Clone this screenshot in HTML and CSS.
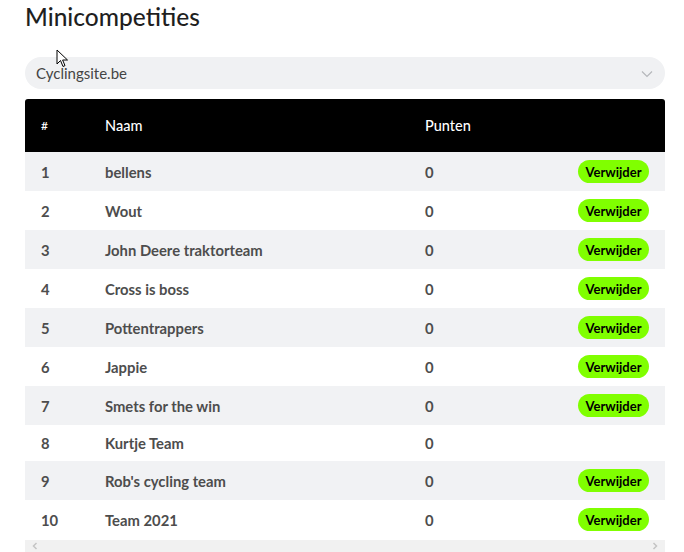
FILE: index.html
```html
<!DOCTYPE html>
<html lang="nl">
<head>
<meta charset="utf-8">
<title>Minicompetities</title>
<link rel="stylesheet" href="styles.css">
</head>
<body>
<div class="page">
  <h1 class="title">Minicompetities</h1>
  <div class="select">
    <span class="select-text">Cyclingsite.be</span>
    <svg class="chev" width="12" height="8" viewBox="0 0 12 8"><path d="M1 1.5 L6 6.5 L11 1.5" fill="none" stroke="#b5b7bb" stroke-width="1.2"/></svg>
  </div>
  <div class="table-wrap">
    <table class="ranking">
      <thead>
        <tr><th class="c-rank">#</th><th class="c-name">Naam</th><th class="c-pts">Punten</th><th class="c-act"></th></tr>
      </thead>
      <tbody>
        <tr><td class="c-rank">1</td><td class="c-name">bellens</td><td class="c-pts">0</td><td class="c-act"><button class="btn">Verwijder</button></td></tr>
        <tr><td class="c-rank">2</td><td class="c-name">Wout</td><td class="c-pts">0</td><td class="c-act"><button class="btn">Verwijder</button></td></tr>
        <tr><td class="c-rank">3</td><td class="c-name">John Deere traktorteam</td><td class="c-pts">0</td><td class="c-act"><button class="btn">Verwijder</button></td></tr>
        <tr><td class="c-rank">4</td><td class="c-name">Cross is boss</td><td class="c-pts">0</td><td class="c-act"><button class="btn">Verwijder</button></td></tr>
        <tr><td class="c-rank">5</td><td class="c-name">Pottentrappers</td><td class="c-pts">0</td><td class="c-act"><button class="btn">Verwijder</button></td></tr>
        <tr><td class="c-rank">6</td><td class="c-name">Jappie</td><td class="c-pts">0</td><td class="c-act"><button class="btn">Verwijder</button></td></tr>
        <tr><td class="c-rank">7</td><td class="c-name">Smets for the win</td><td class="c-pts">0</td><td class="c-act"><button class="btn">Verwijder</button></td></tr>
        <tr class="short"><td class="c-rank">8</td><td class="c-name">Kurtje Team</td><td class="c-pts">0</td><td class="c-act"></td></tr>
        <tr><td class="c-rank">9</td><td class="c-name">Rob's cycling team</td><td class="c-pts">0</td><td class="c-act"><button class="btn">Verwijder</button></td></tr>
        <tr><td class="c-rank">10</td><td class="c-name">Team 2021</td><td class="c-pts">0</td><td class="c-act"><button class="btn">Verwijder</button></td></tr>
      </tbody>
    </table>
    <div class="hscroll">
      <svg width="8" height="8" viewBox="0 0 8 8"><path d="M5.5 1 L2.5 4 L5.5 7" fill="none" stroke="#c4c4c4" stroke-width="1.5"/></svg>
      <svg width="8" height="8" viewBox="0 0 8 8"><path d="M2.5 1 L5.5 4 L2.5 7" fill="none" stroke="#c4c4c4" stroke-width="1.5"/></svg>
    </div>
  </div>
  <svg class="cursor" width="14" height="20" viewBox="0 0 14 20"><path d="M1 1 L1 15 L4.5 11.5 L7 17.5 L9 16.6 L6.6 11 L11.5 11 Z" fill="#fff" stroke="#000" stroke-width="1"/></svg>
</div>
</body>
</html>
```
FILE: styles.css
```css
html, body {
  margin: 0;
  padding: 0;
  background: #fff;
}
body {
  font-family: Lato, "Noto Sans", sans-serif;
  color: #4a4a4a;
}
.page {
  position: relative;
  width: 640px;
  padding: 0 19px 0 25px;
}
.title {
  margin: 0;
  padding-top: 3px;
  height: 54px;
  font-size: 24.5px;
  line-height: 28px;
  font-weight: 500;
  color: #1f1f1f;
}
.select {
  height: 32px;
  border-radius: 16px;
  background: #f0f1f3;
  display: flex;
  align-items: center;
  justify-content: space-between;
  padding: 0 12px 0 11px;
}
.select-text {
  font-size: 15px;
  color: #444;
}
.chev { margin-top: 1px; }
.table-wrap {
  margin-top: 10px;
}
.ranking {
  width: 640px;
  border-collapse: collapse;
  border-spacing: 0;
}
.ranking thead tr {
  background: #000;
}
.ranking th {
  color: #fff;
  font-weight: 500;
  font-size: 14.5px;
  text-align: left;
  height: 53px;
  padding: 0;
}
.ranking th.c-rank { border-top-left-radius: 3px; font-size: 12px; }
.ranking th.c-act { border-top-right-radius: 3px; }
.c-rank { width: 64px; padding-left: 16px !important; }
.c-name { width: 320px; }
.c-pts { width: 100px; }
.c-act { text-align: right; padding-right: 16px !important; }
.ranking td {
  height: 39px;
  padding: 0;
  font-size: 14.8px;
  font-weight: 700;
  color: #4d4d4d;
}
.ranking tbody tr:nth-child(odd) { background: #f1f2f4; }
.ranking tr.short td { height: 36px; }
.btn {
  border: 0;
  background: #80ff00;
  color: #000;
  font-family: Lato, "Noto Sans", sans-serif;
  font-weight: 700;
  font-size: 13px;
  height: 23px;
  width: 71px;
  border-radius: 12px;
  padding: 0;
  vertical-align: middle;
}
.hscroll {
  height: 12px;
  background: #f1f1f1;
  display: flex;
  align-items: center;
  justify-content: space-between;
  padding: 0 6px;
  margin-top: 1px;
}
.cursor {
  position: absolute;
  left: 56px;
  top: 49px;
}
```
